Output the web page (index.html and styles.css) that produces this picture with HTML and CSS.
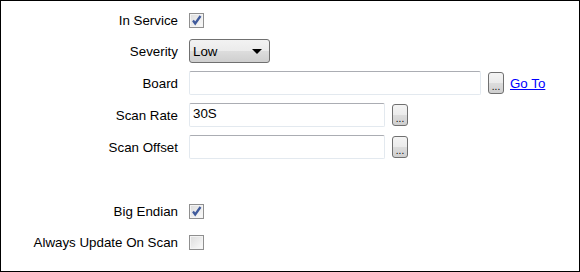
FILE: index.html
```html
<!DOCTYPE html>
<html lang="en">
<head>
    <meta charset="UTF-8">
    <title>Point Properties</title>
    <link rel="stylesheet" href="styles.css">
</head>
<body>
    <div class="panel">
        <!-- general -->
        <div class="row first">
            <span class="label">In Service</span>
            <span class="check">
                <svg width="13" height="13" viewBox="0 0 13 13"><path d="M3 6.5 L5.2 9.5 L10.5 2" fill="none" stroke="#3f5a9c" stroke-width="2.2"/></svg>
            </span>
        </div>
        <div class="row">
            <span class="label">Severity</span>
            <div class="select"><span>Low</span><span class="arrow"></span></div>
        </div>
        <div class="row">
            <span class="label">Board</span>
            <input type="text" class="field board">
            <button class="dots">...</button>
            <a class="link" href="#">Go To</a>
        </div>
        <div class="row">
            <span class="label">Scan Rate</span>
            <input type="text" class="field" value="30S">
            <button class="dots">...</button>
        </div>
        <div class="row">
            <span class="label">Scan Offset</span>
            <input type="text" class="field">
            <button class="dots">...</button>
        </div>
        <div class="row"></div>
        <!-- flags -->
        <div class="row">
            <span class="label">Big Endian</span>
            <span class="check">
                <svg width="13" height="13" viewBox="0 0 13 13"><path d="M3 6.5 L5.2 9.5 L10.5 2" fill="none" stroke="#3f5a9c" stroke-width="2.2"/></svg>
            </span>
        </div>
        <div class="row last">
            <span class="label">Always Update On Scan</span>
            <span class="check"></span>
        </div>
    </div>
</body>
</html>
```

FILE: styles.css
```css
body {
    margin: 0;
    font-family: 'Liberation Sans', Arial, sans-serif;
    font-size: 13.33px;
    color: #000;
    background: #fff;
}
.panel {
    width: 580px;
    height: 272px;
    box-sizing: border-box;
    border: 1px solid #000;
    padding-top: 4px;
}
.row {
    display: flex;
    align-items: center;
    height: 32px;
}
.row.first,
.row.last {
    height: 30px;
}
.label {
    width: 177px;
    text-align: right;
    margin-right: 11px;
    white-space: nowrap;
}
.check {
    width: 15px;
    height: 15px;
    box-sizing: border-box;
    border: 1px solid #8f8f8f;
    background: linear-gradient(135deg, #dcdcdc, #fbfbfb);
    box-shadow: inset 0 0 0 1px #f4f4f4;
    display: flex;
    align-items: center;
    justify-content: center;
}
.select {
    width: 81px;
    height: 24px;
    box-sizing: border-box;
    border: 1px solid #707070;
    border-radius: 3px;
    background: linear-gradient(#f2f2f2, #ebebeb 50%, #dddddd 50%, #cfcfcf);
    display: flex;
    align-items: center;
    justify-content: space-between;
    padding: 0 7px 0 3px;
}
.arrow {
    width: 0;
    height: 0;
    border-left: 5px solid transparent;
    border-right: 5px solid transparent;
    border-top: 5px solid #000;
}
.field {
    width: 196px;
    height: 24px;
    box-sizing: border-box;
    margin: 0;
    border: 1px solid #e3e9ef;
    border-top-color: #abadb3;
    border-radius: 2px;
    padding: 1px 3px 5px;
    font-family: inherit;
    font-size: 13.33px;
    color: #000;
    outline: none;
}
.field.board {
    width: 292px;
}
.dots {
    width: 16px;
    height: 22px;
    box-sizing: border-box;
    margin: 0 0 0 7px;
    padding: 8px 0 0;
    border: 1px solid #707070;
    border-radius: 3px;
    background: linear-gradient(#f4f4f4, #ebebeb 50%, #dddddd 50%, #cfcfcf);
    font-family: inherit;
    font-size: 10px;
    line-height: 10px;
    color: #000;
}
.link {
    margin-left: 6px;
    color: #0000ff;
    text-decoration: underline;
}
```
